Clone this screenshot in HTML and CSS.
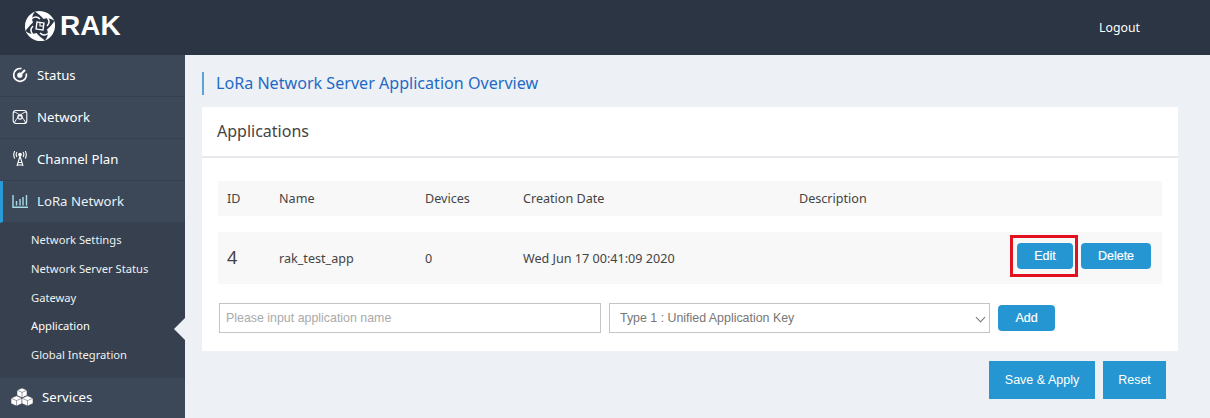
FILE: index.html
```html
<!DOCTYPE html>
<html lang="en">
<head>
    <meta charset="UTF-8">
    <meta name="viewport" content="width=device-width, initial-scale=1.0">
    <title>LoRa Network Server Application Overview</title>
    <link rel="stylesheet" href="styles.css">
</head>
<body>
    <header class="topbar">
        <div class="logo">
            <svg class="logo-mark" width="32" height="32" viewBox="0 0 32 32">
                <defs>
                    <g id="blade">
                        <path d="M11 1.500C19 -0.500 27 3 30.500 11C27 8 22.500 7.500 19.500 9C17.500 6.500 14 3.500 11 1.500Z" fill="#fff"/>
                        <path d="M8 8.500C10.500 6.500 13.500 6.500 16 9" fill="none" stroke="#fff" stroke-width="1.500"/>
                    </g>
                </defs>
                <use href="#blade"/>
                <use href="#blade" transform="rotate(90 16 16)"/>
                <use href="#blade" transform="rotate(180 16 16)"/>
                <use href="#blade" transform="rotate(270 16 16)"/>
                <rect x="12.500" y="12.500" width="7" height="7" fill="none" stroke="#fff" stroke-width="1.400" transform="rotate(8 16 16)"/>
                <path d="M16 12.500V16H19.500" fill="none" stroke="#fff" stroke-width="1.200"/>
            </svg>
            <span class="logo-text">RAK</span>
        </div>
        <a class="logout">Logout</a>
    </header>
    <div class="layout">
        <nav class="sidebar">
            <div class="nav-item">
                <svg class="nav-icon" width="16" height="16" viewBox="0 0 16 16" fill="none" stroke="#fff" stroke-width="1.700">
                    <path d="M9.500 1.700A6.400 6.400 0 1 0 14.300 6.500"/>
                    <circle cx="7.800" cy="8.200" r="2.600" fill="#fff" stroke="none"/>
                    <path d="M8 8L13 3" stroke-width="2.200"/>
                </svg>
                <span>Status</span>
            </div>
            <div class="nav-item">
                <svg class="nav-icon" width="16" height="16" viewBox="0 0 16 16" fill="none" stroke="#fff" stroke-width="1.100">
                    <path d="M4 1.500H12C13.500 1.500 14.800 2.800 14.800 4.300V11.700C14.800 13.200 13.500 14.500 12 14.500H4C2.500 14.500 1.200 13.200 1.200 11.700V4.300C1.200 2.800 2.500 1.500 4 1.500Z"/>
                    <path d="M2 3C6 3.500 12.500 10 13.500 14M14 3C10 3.500 3.500 10 2.500 14" stroke-width="1"/>
                    <circle cx="8" cy="8" r="2.200" stroke-width="1.200"/>
                </svg>
                <span>Network</span>
            </div>
            <div class="nav-item">
                <svg class="nav-icon" width="16" height="16" viewBox="0 0 16 16" fill="none" stroke="#fff" stroke-width="1.100">
                    <path d="M8 5L5 15M8 5L11 15M6 11.500H10M5.300 14H10.700"/>
                    <circle cx="8" cy="3.500" r="1.300" fill="#fff"/>
                    <path d="M5 1C4 2.500 4 4.500 5 6M11 1C12 2.500 12 4.500 11 6M2.700 0C1.400 2.500 1.400 5 2.700 7.500M13.300 0C14.600 2.500 14.600 5 13.300 7.500"/>
                </svg>
                <span>Channel Plan</span>
            </div>
            <div class="nav-item active">
                <svg class="nav-icon" width="16" height="16" viewBox="0 0 16 16" fill="none" stroke="#a8dcea" stroke-width="1.400">
                    <path d="M1 2V14.300H16"/>
                    <path d="M4.500 8V12.500M8 6V12.500M11 4V12.500M14.500 2V12.500"/>
                </svg>
                <span>LoRa Network</span>
            </div>
            <ul class="subnav">
                <li>Network Settings</li>
                <li>Network Server Status</li>
                <li>Gateway</li>
                <li class="current">Application</li>
                <li>Global Integration</li>
            </ul>
            <div class="nav-item services">
                <svg class="nav-icon" width="22" height="18" viewBox="0 0 22 18" fill="#fff" stroke="#3c4757" stroke-width="0.500">
                    <path d="M11 0L16 2.200V7.500L11 9.700L6 7.500V2.200Z"/>
                    <path d="M6 2.200L11 4.400L16 2.200M11 4.400V9.700" fill="none"/>
                    <path d="M5.500 7.800L11 10.200V15.600L5.500 18L0 15.600V10.200Z"/>
                    <path d="M0 10.200L5.500 12.600L11 10.200M5.500 12.600V18" fill="none"/>
                    <path d="M16.500 7.800L22 10.200V15.600L16.500 18L11 15.600V10.200Z"/>
                    <path d="M11 10.200L16.500 12.600L22 10.200M16.500 12.600V18" fill="none"/>
                </svg>
                <span>Services</span>
            </div>
        </nav>
        <main class="content">
            <h1 class="page-title">LoRa Network Server Application Overview</h1>
            <section class="panel">
                <h2 class="panel-title">Applications</h2>
                <div class="panel-body">
                    <div class="row row-head">
                        <div class="col-id">ID</div>
                        <div class="col-name">Name</div>
                        <div class="col-devices">Devices</div>
                        <div class="col-date">Creation Date</div>
                        <div class="col-desc">Description</div>
                    </div>
                    <div class="row row-app">
                        <div class="col-id app-id">4</div>
                        <div class="col-name">rak_test_app</div>
                        <div class="col-devices">0</div>
                        <div class="col-date">Wed Jun 17 00:41:09 2020</div>
                        <div class="col-desc"></div>
                        <div class="row-actions">
                            <button class="btn btn-edit">Edit</button>
                            <button class="btn btn-delete">Delete</button>
                        </div>
                    </div>
                    <div class="add-form">
                        <input class="field field-name" type="text" placeholder="Please input application name">
                        <div class="select-wrap">
                            <select class="field field-type">
                                <option>Type 1 : Unified Application Key</option>
                            </select>
                        </div>
                        <button class="btn btn-add">Add</button>
                    </div>
                </div>
            </section>
            <div class="page-actions">
                <button class="btn-square btn-save">Save &amp; Apply</button>
                <button class="btn-square btn-reset">Reset</button>
            </div>
        </main>
    </div>
</body>
</html>
```

FILE: styles.css
```css
* {
    box-sizing: border-box;
}
html, body {
    height: 418px;
    overflow: hidden;
}
body {
    margin: 0;
    font-family: "Noto Sans", "Open Sans", sans-serif;
    background-color: #edf0f5;
    color: #444;
}
.topbar {
    height: 55px;
    background-color: #2b3543;
    display: flex;
    align-items: center;
    justify-content: space-between;
    padding: 0 70px 0 24px;
    color: #fff;
}
.logo {
    display: flex;
    align-items: center;
    gap: 4px;
    margin-top: -3px;
}
.logo-text {
    font-family: "Liberation Sans", Arial, sans-serif;
    font-size: 28px;
    font-weight: 700;
}
.logout {
    font-size: 12.300px;
}
.layout {
    display: flex;
    height: 363px;
}
.sidebar {
    width: 185px;
    flex-shrink: 0;
    background-color: #3a4553;
    color: #fff;
    position: relative;
}
.nav-item {
    height: 42px;
    display: flex;
    align-items: center;
    padding: 0 0 2px 12px;
    gap: 9px;
    font-size: 13.200px;
    border-bottom: 1px solid #36414f;
    background-color: #3c4757;
}
.nav-item.active {
    border-left: 3px solid #2a9ad6;
    padding-left: 9px;
    color: #e6f2f6;
}
.services {
    gap: 9px;
    padding: 0 0 4px 11px;
}
.nav-icon {
    flex-shrink: 0;
}
.subnav {
    list-style: none;
    margin: 0;
    padding: 3px 0 8px 31px;
    height: 155px;
    background-color: #36404e;
    font-size: 11.200px;
    color: #eef0f2;
}
.subnav li {
    height: 28.800px;
    line-height: 28.800px;
}
.subnav .current {
    color: #fff;
    position: relative;
}
.subnav .current::after {
    content: "";
    position: absolute;
    right: 0;
    top: 6px;
    border-style: solid;
    border-width: 11px 11px 11px 0;
    border-color: transparent #edf0f5 transparent transparent;
}
.content {
    flex: 1;
    padding: 17px 32px 0 17px;
}
.page-title {
    margin: 0;
    height: 23px;
    line-height: 23px;
    border-left: 2px solid #5ba4d6;
    padding-left: 12px;
    font-size: 16.100px;
    font-weight: 400;
    color: #1f6ac6;
}
.panel {
    margin-top: 12px;
    height: 244px;
    background-color: #fff;
}
.panel-title {
    margin: 0;
    height: 51px;
    line-height: 49px;
    padding-left: 15px;
    font-size: 16px;
    font-weight: 400;
    color: #444;
    border-bottom: 2px solid #e6e8eb;
}
.panel-body {
    padding: 23px 16px 0;
}
.row {
    display: flex;
    align-items: center;
    background-color: #f8f8f9;
    font-size: 12.600px;
    position: relative;
}
.row-head {
    height: 35px;
}
.row-app {
    height: 52px;
    margin-top: 16px;
}
.col-id {
    width: 61px;
    padding-left: 9px;
}
.app-id {
    font-size: 18px;
    padding-bottom: 2px;
}
.col-name {
    width: 146px;
}
.col-devices {
    width: 98px;
}
.col-date {
    width: 276px;
}
.col-desc {
    flex: 1;
}
.row-actions {
    display: flex;
    gap: 8px;
    padding: 0 11px 4px 0;
}
.btn {
    height: 26px;
    padding: 0;
    border: none;
    border-radius: 4px;
    background-color: #2596d1;
    color: #fff;
    font-family: "Liberation Sans", Arial, sans-serif;
    font-size: 12.500px;
    -webkit-text-stroke: 0.2px #fff;
}
.btn-edit {
    width: 56px;
    position: relative;
}
.btn-edit::after {
    content: "";
    position: absolute;
    top: -8px;
    bottom: -8px;
    left: -7px;
    right: -5px;
    border: 3px solid #e2111f;
}
.btn-delete {
    width: 70px;
}
.add-form {
    display: flex;
    align-items: center;
    gap: 8px;
    margin-top: 19px;
    padding-left: 1px;
}
.field {
    height: 30px;
    border: 1px solid #c4c4c4;
    background-color: #fff;
    font-family: "Liberation Sans", Arial, sans-serif;
    font-size: 12.400px;
    color: #777;
    border-radius: 0;
    outline: none;
}
.field::placeholder {
    color: #aaa;
    opacity: 1;
}
.field-name {
    width: 382px;
    padding: 0 6px;
}
.select-wrap {
    position: relative;
    width: 381px;
}
.select-wrap::after {
    content: "";
    position: absolute;
    right: 6px;
    top: 11px;
    width: 6px;
    height: 6px;
    border-right: 1px solid #777;
    border-bottom: 1px solid #777;
    transform: rotate(45deg);
    pointer-events: none;
}
.field-type {
    width: 100%;
    padding: 0 10px;
    appearance: none;
}
.btn-add {
    width: 57px;
}
.page-actions {
    display: flex;
    justify-content: flex-end;
    gap: 8px;
    margin-top: 10px;
    padding-right: 12px;
}
.btn-square {
    height: 38px;
    border: none;
    background-color: #2596d1;
    color: #fff;
    font-family: "Liberation Sans", Arial, sans-serif;
    font-size: 12.500px;
    padding: 0;
}
.btn-save {
    width: 106px;
}
.btn-reset {
    width: 63px;
}
```
